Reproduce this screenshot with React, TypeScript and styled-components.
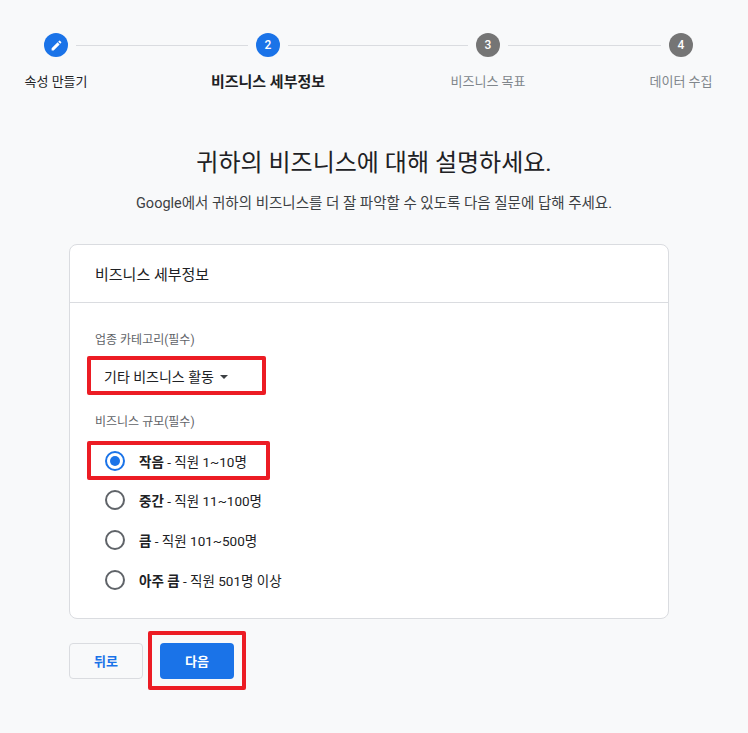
import React from "react";
import styled, { createGlobalStyle } from "styled-components";

const Global = createGlobalStyle`
  body { margin: 0; background: #f8f9fa; font-family: Roboto, "Noto Sans CJK KR", sans-serif; color: #202124; }
`;

const Page = styled.div`
  width: 748px; height: 733px; box-sizing: border-box; padding-top: 33px;
`;
const Stepper = styled.div`
  display: flex; align-items: flex-start; padding-left: 44px;
`;
const Step = styled.div`
  width: 24px; display: flex; flex-direction: column; align-items: center;
`;
const Dot = styled.div<{ $c: string }>`
  width: 24px; height: 24px; border-radius: 50%; background: ${p => p.$c};
  color: #fff; font-size: 12px; font-weight: 500; display: flex; align-items: center; justify-content: center;
`;
const StepLabel = styled.div<{ $active?: boolean; $muted?: boolean }>`
  width: 24px; display: flex; justify-content: center; white-space: nowrap; margin-top: ${p => p.$active ? 13 : 14}px;
  font-size: ${p => p.$active ? 15 : 13}px; font-weight: ${p => p.$active ? 700 : 400};
  color: ${p => p.$muted ? "#80868b" : "#202124"};
`;
const Line = styled.div<{ $w: number }>`
  width: ${p => p.$w}px; height: 1px; background: #dadce0; margin: 12px 8px 0;
`;
const Title = styled.h1`
  margin: 55px 0 0; text-align: center; font-size: 24px; font-weight: 400; line-height: 34px;
`;
const Sub = styled.p`
  margin: 14px 0 0; text-align: center; font-size: 14.5px; color: #3c4043; line-height: 20px;
`;
const Card = styled.div`
  margin: 30px 0 0 69px; width: 600px; height: 375px; box-sizing: border-box; background: #fff;
  border: 1px solid #dadce0; border-radius: 8px;
`;
const CardHead = styled.div`
  height: 57px; border-bottom: 1px solid #dadce0; padding: 0 25px; display: flex; align-items: center; font-size: 15px;
`;
const CardBody = styled.div` padding: 29px 17px 0; `;
const FieldLabel = styled.div<{ $mt?: number }>`
  font-size: 12px; color: #5f6368; padding-left: 8px; margin-top: ${p => p.$mt ?? 0}px; line-height: 16px;
`;
const RedBox = styled.div<{ $w: number; $h: number; $mt: number }>`
  width: ${p => p.$w}px; height: ${p => p.$h}px; margin-top: ${p => p.$mt}px; box-sizing: border-box;
  border: 4px solid #ec1c24; border-radius: 2px; display: flex; align-items: center;
`;
const Select = styled.div`
  padding-left: 13px; font-size: 14px; display: flex; align-items: center; gap: 6px;
`;
const Caret = styled.span`
  width: 0; height: 0; border-left: 4px solid transparent; border-right: 4px solid transparent; border-top: 4px solid #3c4043; margin-top: 2px;
`;
const Radio = styled.div<{ $h?: number }>`
  display: flex; align-items: center; height: ${p => p.$h ?? 40}px; padding-left: 18px; gap: 14px; font-size: 13.5px;
  b { font-weight: 700; }
`;
const Circle = styled.span<{ $on?: boolean }>`
  width: 20px; height: 20px; box-sizing: border-box; border-radius: 50%;
  border: 2px solid ${p => p.$on ? "#1a73e8" : "#5f6368"}; display: flex; align-items: center; justify-content: center;
  &::after { content: ""; width: 10px; height: 10px; border-radius: 50%; background: ${p => p.$on ? "#1a73e8" : "transparent"}; }
`;
const Buttons = styled.div`
  display: flex; align-items: center; margin: 12px 0 0 69px; gap: 5px;
`;
const BackBtn = styled.button`
  width: 74px; height: 36px; border: 1px solid #dadce0; border-radius: 4px; background: #f8f9fa;
  color: #1a73e8; font: 700 13px Roboto, "Noto Sans CJK KR", sans-serif;
`;
const NextWrap = styled.div`
  width: 98px; height: 59px; box-sizing: border-box; border: 4px solid #ec1c24; border-radius: 2px;
  display: flex; align-items: center; justify-content: center;
`;
const NextBtn = styled.button`
  width: 74px; height: 36px; border: none; border-radius: 4px; background: #1a73e8;
  color: #fff; font: 700 13px Roboto, "Noto Sans CJK KR", sans-serif;
`;

export default function App() {
  return (
    <Page>
      <Global />
      <Stepper>
        <Step>
          <Dot $c="#1a73e8">
            <svg width="13" height="13" viewBox="0 0 24 24"><path fill="#fff" d="M3 17.25V21h3.75L17.81 9.94l-3.75-3.75L3 17.25zM20.71 7.04a1 1 0 0 0 0-1.41l-2.34-2.34a1 1 0 0 0-1.41 0l-1.83 1.83 3.75 3.75 1.83-1.83z"/></svg>
          </Dot>
          <StepLabel>속성 만들기</StepLabel>
        </Step>
        <Line $w={172} />
        <Step><Dot $c="#1a73e8">2</Dot><StepLabel $active>비즈니스 세부정보</StepLabel></Step>
        <Line $w={180} />
        <Step><Dot $c="#757575">3</Dot><StepLabel $muted>비즈니스 목표</StepLabel></Step>
        <Line $w={153} />
        <Step><Dot $c="#757575">4</Dot><StepLabel $muted>데이터 수집</StepLabel></Step>
      </Stepper>
      <Title>귀하의 비즈니스에 대해 설명하세요.</Title>
      <Sub>Google에서 귀하의 비즈니스를 더 잘 파악할 수 있도록 다음 질문에 답해 주세요.</Sub>
      <Card>
        <CardHead>비즈니스 세부정보</CardHead>
        <CardBody>
          <FieldLabel>업종 카테고리(필수)</FieldLabel>
          <RedBox $w={179} $h={39} $mt={8}>
            <Select>기타 비즈니스 활동 <Caret /></Select>
          </RedBox>
          <FieldLabel $mt={19}>비즈니스 규모(필수)</FieldLabel>
          <RedBox $w={183} $h={39} $mt={11}>
            <Radio $h={31} style={{ paddingLeft: 14 }}><Circle $on /><span><b>작음</b> - 직원 1~10명</span></Radio>
          </RedBox>
          <Radio><Circle /><span><b>중간</b> - 직원 11~100명</span></Radio>
          <Radio><Circle /><span><b>큼</b> - 직원 101~500명</span></Radio>
          <Radio><Circle /><span><b>아주 큼</b> - 직원 501명 이상</span></Radio>
        </CardBody>
      </Card>
      <Buttons>
        <BackBtn>뒤로</BackBtn>
        <NextWrap><NextBtn>다음</NextBtn></NextWrap>
      </Buttons>
    </Page>
  );
}
